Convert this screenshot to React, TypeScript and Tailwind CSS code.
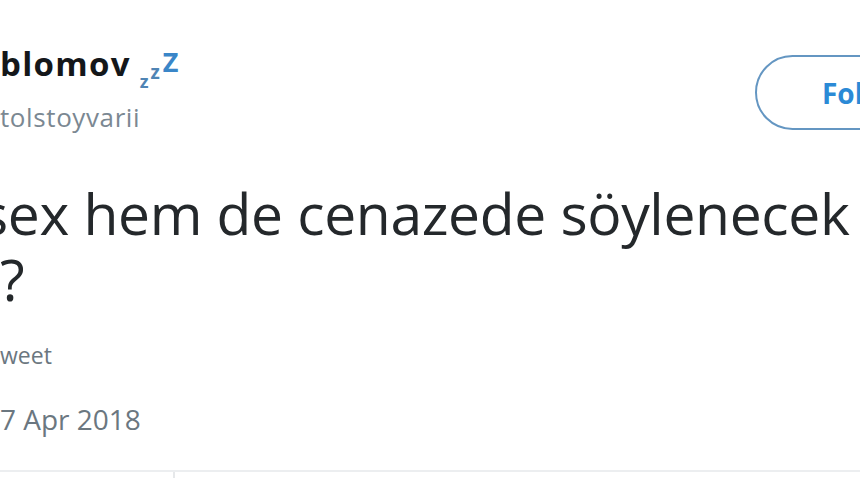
import React from "react";

export default function App() {
  return (
    <div className="relative w-[860px] h-[480px] overflow-hidden bg-white font-['Open_Sans',sans-serif]">
      <div className="flex items-start justify-between pt-[44px]">
        <div className="flex flex-col">
          <div className="flex items-start h-[40px]">
            <span className="text-[33px] leading-[40px] font-bold text-[#14171a] tracking-[1.3px]">blomov</span>
            <span className="flex items-start ml-[9px] font-bold text-[#4f84b4]">
              <span className="text-[18px] leading-none mt-[28px]">z</span>
              <span className="text-[19px] leading-none mt-[19px] ml-[2px]">z</span>
              <span className="text-[27px] leading-none mt-[4px] ml-[3px] text-[#3a86c8]">Z</span>
            </span>
          </div>
          <div className="mt-[17px] text-[26px] leading-[32px] tracking-[0.6px] text-[#7b8892]">tolstoyvarii</div>
        </div>
        <div className="mt-[11px] -mr-[95px] flex h-[75px] w-[200px] items-center rounded-full border-2 border-[#6496c2] pl-[65px]">
          <span className="text-[28px] font-bold text-[#2b8ad6]">Follow</span>
        </div>
      </div>
      <div className="mt-[47px] -ml-[19px] text-[57px] leading-[66px] tracking-[-0.35px] text-[#24282b] whitespace-nowrap">
        <div>sex hem de cenazede söylenecek</div>
        <div className="ml-[19px]">?</div>
      </div>
      <div className="mt-[29px] text-[23px] leading-[28px] text-[#6b7780]">weet</div>
      <div className="mt-[32px] text-[28px] leading-[36px] text-[#6b7780]">7 Apr 2018</div>
      <div className="relative mt-[33px] border-t-2 border-[#eceef0]">
        <div className="absolute left-[173px] top-0 h-[6px] w-[2px] bg-[#e6e8ea]" />
      </div>
    </div>
  );
}
